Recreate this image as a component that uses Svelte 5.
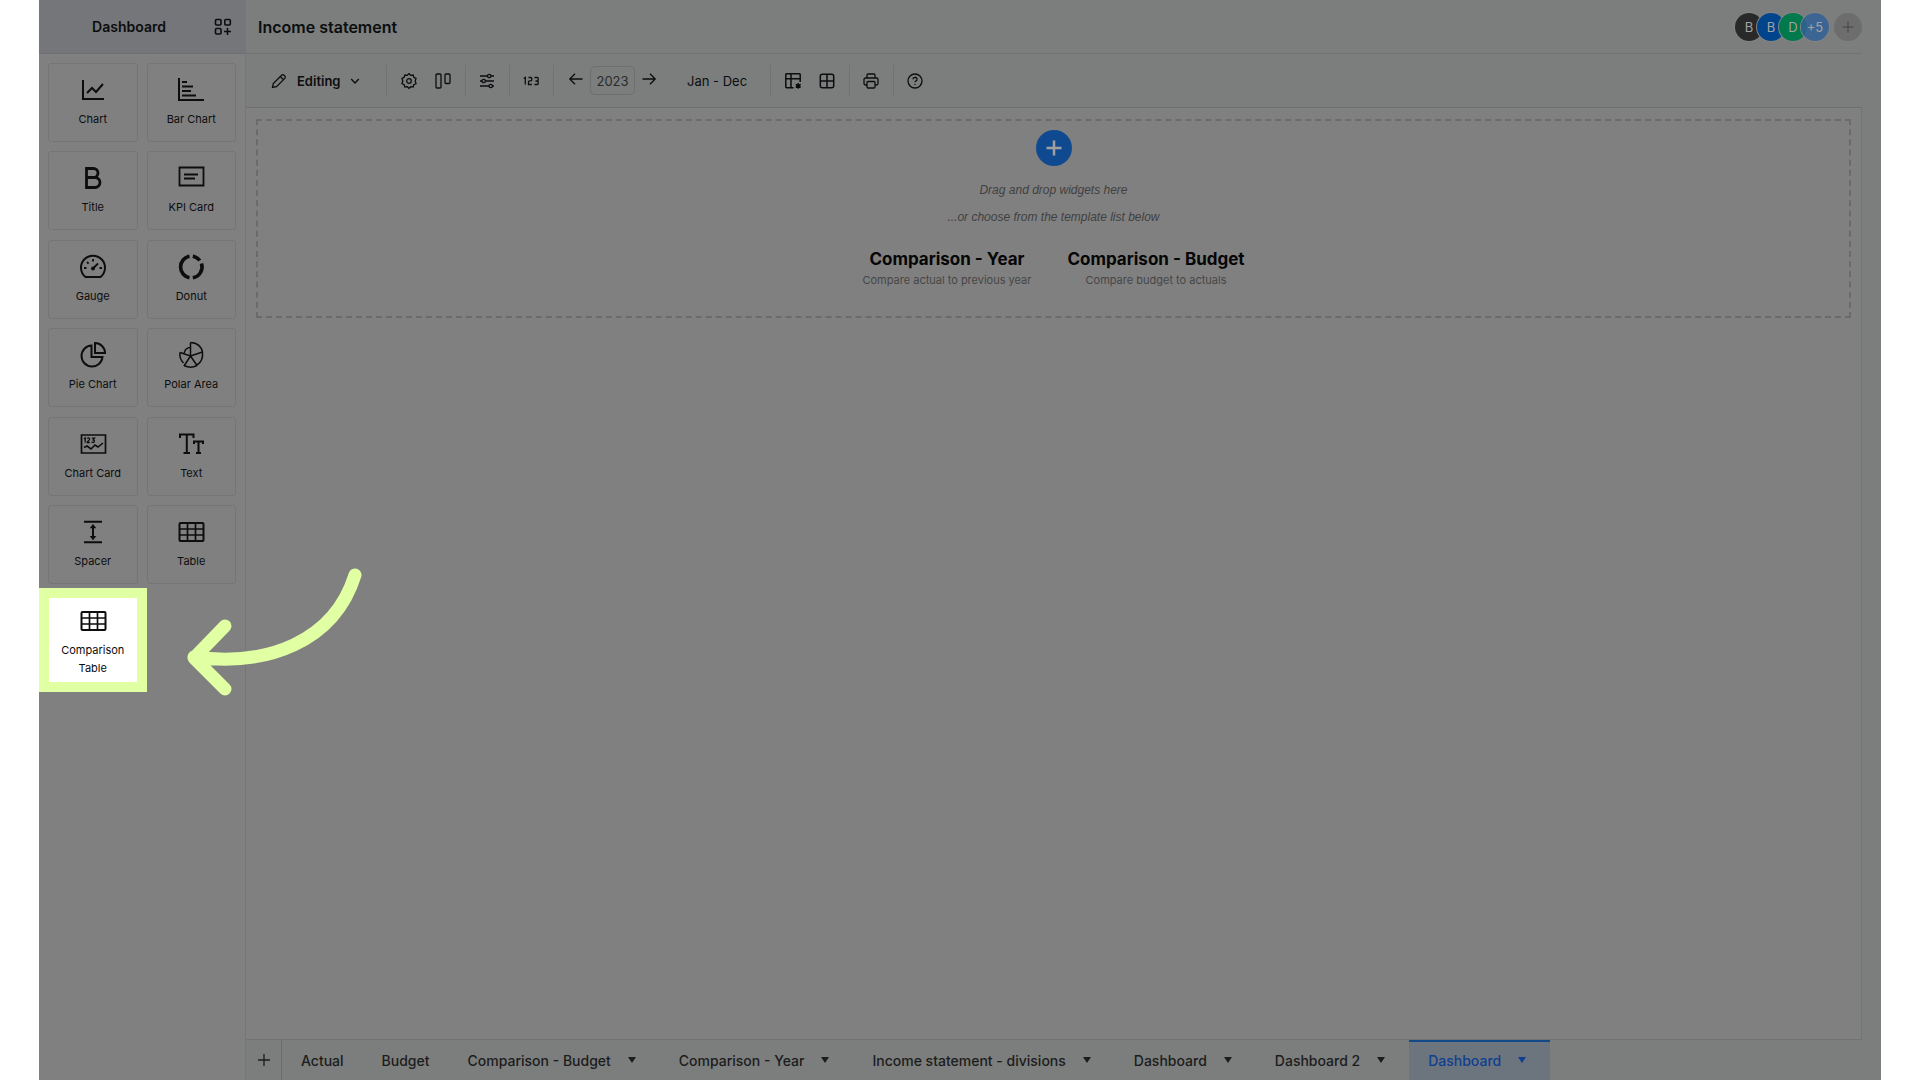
<script>
  const widgets = [
    { label: 'Chart', icon: 'chart' },
    { label: 'Bar Chart', icon: 'bar' },
    { label: 'Title', icon: 'title' },
    { label: 'KPI Card', icon: 'kpi' },
    { label: 'Gauge', icon: 'gauge' },
    { label: 'Donut', icon: 'donut' },
    { label: 'Pie Chart', icon: 'pie' },
    { label: 'Polar Area', icon: 'polar' },
    { label: 'Chart Card', icon: 'card' },
    { label: 'Text', icon: 'text' },
    { label: 'Spacer', icon: 'spacer' },
    { label: 'Table', icon: 'table' },
    { label: 'Comparison Table', icon: 'table', focus: true }
  ];

  const people = [
    { text: 'B', tone: 'dark' },
    { text: 'B', tone: 'blue' },
    { text: 'D', tone: 'green' },
    { text: '+5', tone: 'more' }
  ];

  const tabs = [
    { label: 'Actual' },
    { label: 'Budget' },
    { label: 'Comparison - Budget', menu: true },
    { label: 'Comparison - Year', menu: true },
    { label: 'Income statement - divisions', menu: true },
    { label: 'Dashboard', menu: true },
    { label: 'Dashboard 2', menu: true },
    { label: 'Dashboard', menu: true, active: true }
  ];

  const templates = [
    { title: 'Comparison - Year', note: 'Compare actual to previous year' },
    { title: 'Comparison - Budget', note: 'Compare budget to actuals' }
  ];
</script>

{#snippet widgetIcon(name)}
  <svg class="wicon" viewBox="0 0 28 28" aria-hidden="true">
    {#if name === 'chart'}
      <path d="M4 4v19h21" stroke-width="2" />
      <path d="M8 17l5-5 4 4 7-8" stroke-width="2" />
    {:else if name === 'bar'}
      <path d="M2 2v22h25" stroke-width="2" />
      <path d="M5 6h5M5 10.500h11M5 15h9M5 19.500h14" stroke-width="2" />
    {:else if name === 'title'}
      <path d="M7.500 4.500h7a4.500 4.500 0 0 1 0 9h-7zM7.500 13.500h8.500a5 5 0 0 1 0 10H7.500z" stroke-width="2.800" />
    {:else if name === 'kpi'}
      <path d="M2.500 3.500h24v18h-24z" stroke-width="1.800" />
      <path d="M7 10.500h14M7 14.500h11" stroke-width="2" />
    {:else if name === 'gauge'}
      <path d="M6.500 24A12 12 0 1 1 21.500 24z" stroke-width="2" />
      <path d="M14 15.500l5-5" stroke-width="1.800" />
      <circle cx="14" cy="15.500" r="2" class="fill" />
      <path d="M14 6v2.500M8 9l1.600 1.600M5 15h2.500M20.500 15H23" stroke-width="1.800" />
    {:else if name === 'donut'}
      <path d="M12.500 3.200A11 11 0 0 0 12.500 24.800" stroke-width="3.600" />
      <path d="M15.800 3.200a11 11 0 0 1 7 4.300M24.500 10.500a11 11 0 0 1-8.700 14.300" stroke-width="3.600" />
    {:else if name === 'pie'}
      <path d="M12.500 4.500a10.500 10.500 0 1 0 11 11.500h-11z" stroke-width="2" />
      <path d="M16 2v10h10a10 10 0 0 0-10-10z" stroke-width="2" />
    {:else if name === 'polar'}
      <path d="M13.500 1.500v13.500L3 11.500M13.500 15L7 25M13.500 15l6.500 9.500M13.500 15l12-4" stroke-width="1.500" />
      <path d="M13.500 1.500c6.500 0 11.500 4.500 12 10 .5 5.500-1.500 10-5.500 12.500M13.500 6.500c-3.500 0-5.700 2-6.500 6M3 11.500c-.8 4.500.5 7.500 3.500 10.500M7 24.500c4.500 2.200 9 2.200 13 0" stroke-width="1.500" />
    {:else if name === 'card'}
      <path d="M2.500 5h24v18h-24z" stroke-width="1.700" />
      <path d="M5 17.500l3-1.500 4 3 4-4 3 2 5-4" stroke-width="1.600" />
      <path d="M5 9l1.200-1v4.500M8.200 8.500c.6-.9 2.600-.7 2.400.7-.1 1-2.400 2.300-2.400 3.300h2.600M12.800 8.200h2.700l-1.400 1.700c2 .2 1.600 2.600 0 2.600-.8 0-1.300-.4-1.500-.8" stroke-width="1.300" />
    {:else if name === 'text'}
      <path d="M3 8V4.500h13.500V8M9.800 4.500v18.500M6.500 23h6.500M17 14v-2.500h9V14M21.500 11.500V23M19 23h5" stroke-width="2" />
    {:else if name === 'spacer'}
      <path d="M5 3.800h18M5 24.300h18" stroke-width="2" />
      <path d="M14 8v12" stroke-width="2" />
      <path d="M14 6l3.300 4.200h-6.600zM14 22.200l3.300-4.200h-6.600z" class="fill" />
    {:else}
      <rect x="2.500" y="5" width="24" height="18" rx="1" stroke-width="2" />
      <path d="M2.500 11h24M2.500 17h24M10.500 5v18M18.500 5v18" stroke-width="1.700" />
    {/if}
  </svg>
{/snippet}

<div class="app">
  <aside class="sidebar">
    <header class="side-head">
      <h2>Dashboard</h2>
      <button class="plain" aria-label="Add widget">
        <svg class="grid-plus" viewBox="0 0 18 18" aria-hidden="true">
          <rect x="1.500" y="1.500" width="5.500" height="5.500" rx="1" />
          <rect x="10.800" y="1.500" width="5.500" height="5.500" rx="1" />
          <rect x="1.500" y="10.500" width="5.500" height="5.500" rx="1" />
          <path d="M13.500 10v7M10 13.500h7" />
        </svg>
      </button>
    </header>
    <ul class="widgets">
      {#each widgets as w}
        <li class:focus={w.focus}>
          <button class="tile">
            {@render widgetIcon(w.icon)}
            <span>{w.label}</span>
          </button>
        </li>
      {/each}
    </ul>
  </aside>

  <main class="main">
    <header class="top">
      <h1>Income statement</h1>
      <div class="people">
        {#each people as p}
          <span class="avatar {p.tone}">{p.text}</span>
        {/each}
        <button class="avatar add" aria-label="Invite">
          <svg viewBox="0 0 12 12" aria-hidden="true"><path d="M6 .5v11M.5 6h11" /></svg>
        </button>
      </div>
    </header>

    <div class="toolbar" role="toolbar" aria-label="Document tools">
      <div class="group edit">
        <button class="mode">
          <svg class="i16" viewBox="0 0 16 16" aria-hidden="true"><path d="M1.500 14.500l.8-4 8.300-8.300a1.700 1.700 0 0 1 2.400 0l.8.800a1.700 1.700 0 0 1 0 2.400l-8.300 8.300zM9.300 3.500l3.200 3.200" /></svg>
          <span>Editing</span>
          <svg class="chev" viewBox="0 0 10 10" aria-hidden="true"><path d="M1.200 3l3.800 4 3.800-4" /></svg>
        </button>
      </div>
      <div class="group">
        <button class="plain" aria-label="Settings">
          <svg class="i16" viewBox="0 0 16 16" aria-hidden="true"><path d="M8 .7l1.800 1.600 2.400-.3.600 2.300 2.200 1-.800 2.700.800 2.700-2.200 1-.600 2.300-2.400-.3L8 15.300l-1.800-1.600-2.400.3-.600-2.300-2.200-1L1.800 8 1 5.300l2.200-1L3.800 2l2.400.3z" /><circle cx="8" cy="8" r="2.300" /></svg>
        </button>
        <button class="plain" aria-label="Columns">
          <svg class="i16" viewBox="0 0 16 16" aria-hidden="true"><rect x="1" y="1" width="5" height="14" rx="1" /><rect x="10" y="1" width="5" height="9.500" rx="1" /></svg>
        </button>
      </div>
      <div class="group single">
        <button class="plain" aria-label="Filters">
          <svg class="i16" viewBox="0 0 16 16" aria-hidden="true"><path d="M1 3h7.500M12 3h3M1 8h2M6.500 8H15M1 13h9M13.500 13H15" /><circle cx="10.200" cy="3" r="1.700" /><circle cx="4.700" cy="8" r="1.700" /><circle cx="11.700" cy="13" r="1.700" /></svg>
        </button>
      </div>
      <div class="group single">
        <button class="plain" aria-label="Number format">
          <svg class="i16" viewBox="0 0 16 16" aria-hidden="true"><path d="M.7 5.500L2.300 4.500V11.500M5.500 4.500h2.300a1 1 0 0 1 1 1v1.300a1 1 0 0 1-1 1H6.500a1 1 0 0 0-1 1v2.700h3.300M11.500 4.500h2.700a1 1 0 0 1 1 1v1.500a1 1 0 0 1-1 1h-1.700M14.200 8a1 1 0 0 1 1 1v1.500a1 1 0 0 1-1 1h-2.700" /></svg>
        </button>
      </div>
      <div class="group period">
        <button class="plain arrow" aria-label="Previous year">
          <svg class="i16" viewBox="0 0 16 16" aria-hidden="true"><path d="M14.500 8H2M7 2.800L1.800 8 7 13.200" /></svg>
        </button>
        <button class="year">2023</button>
        <button class="plain arrow" aria-label="Next year">
          <svg class="i16" viewBox="0 0 16 16" aria-hidden="true"><path d="M1.500 8H14M9 2.800L14.200 8 9 13.200" /></svg>
        </button>
        <button class="range">Jan - Dec</button>
      </div>
      <div class="group">
        <button class="plain" aria-label="Table settings">
          <svg class="i16" viewBox="0 0 16 16" aria-hidden="true"><path d="M15.200 9V1.500a.7.7 0 0 0-.7-.7H1.500a.7.7 0 0 0-.7.7v12.500a.7.7 0 0 0 .7.7h7M.8 5.800h14.400M6 .8v13.900" stroke-width="1.500" /><path d="M13.200 10v5.800M10.700 11.400l5 3M10.700 14.400l5-3" /><circle cx="13.200" cy="12.900" r="1.400" /></svg>
        </button>
        <button class="plain" aria-label="Grid">
          <svg class="i16" viewBox="0 0 16 16" aria-hidden="true"><rect x="1.300" y="1.300" width="13.400" height="13.400" rx="2" stroke-width="1.500" /><path d="M8 1.300v13.400M1.300 8h13.400" stroke-width="1.500" /></svg>
        </button>
      </div>
      <div class="group single">
        <button class="plain" aria-label="Print">
          <svg class="i16" viewBox="0 0 16 16" aria-hidden="true"><path d="M4 5V2a1 1 0 0 1 1-1h6a1 1 0 0 1 1 1v3M4 12H2.500A1.500 1.500 0 0 1 1 10.500v-4A1.500 1.500 0 0 1 2.500 5h11A1.500 1.500 0 0 1 15 6.500v4a1.500 1.500 0 0 1-1.500 1.500H12" /><rect x="4" y="8.500" width="8" height="6.500" rx="1" /></svg>
        </button>
      </div>
      <div class="group single">
        <button class="plain" aria-label="Help">
          <svg class="i16" viewBox="0 0 16 16" aria-hidden="true"><circle cx="8" cy="8" r="7" /><path d="M6 6.300a2 2 0 1 1 2.800 1.800c-.6.300-.8.600-.8 1.200M8 11v1" /></svg>
        </button>
      </div>
    </div>

    <section class="canvas">
      <div class="drop">
        <button class="add-widget" aria-label="Add widget here">
          <svg viewBox="0 0 16 16" aria-hidden="true"><path d="M8 .5v15M.5 8h15" /></svg>
        </button>
        <p class="hint">Drag and drop widgets here</p>
        <p class="hint">...or choose from the template list below</p>
        <div class="templates">
          {#each templates as t}
            <button class="template">
              <strong>{t.title}</strong>
              <small>{t.note}</small>
            </button>
          {/each}
        </div>
      </div>
    </section>

    <nav class="tabs" aria-label="Sheets">
      <button class="new" aria-label="New sheet">
        <svg viewBox="0 0 12 12" aria-hidden="true"><path d="M6 0v12M0 6h12" /></svg>
      </button>
      {#each tabs as t}
        <button class="tab" class:active={t.active} class:menu={t.menu}>
          {t.label}
          {#if t.menu}
            <svg viewBox="0 0 8 6" aria-hidden="true"><path d="M0 0h8L4 6z" /></svg>
          {/if}
        </button>
      {/each}
    </nav>
  </main>

  <svg class="pointer" viewBox="0 0 176 128" aria-hidden="true">
    <path d="M38 16L7 48l31 31M7 47C80 57 147 32 168-35" />
  </svg>
</div>

<style>
  :global(body) {
    margin: 0;
    background: #fff;
  }
  .app {
    position: relative;
    display: flex;
    min-height: 100vh;
    margin: 0 39px;
    background: #808080;
    color: #0c0d0e;
    font-family: Inter, 'Liberation Sans', sans-serif;
    font-size: 14px;
  }
  h1, h2, p, ul {
    margin: 0;
    padding: 0;
  }
  button {
    margin: 0;
    padding: 0;
    border: 0;
    background: none;
    color: inherit;
    font: inherit;
    cursor: pointer;
  }
  svg {
    display: block;
    flex: none;
    fill: none;
    stroke: currentColor;
    overflow: visible;
  }
  .plain {
    display: flex;
  }

  .sidebar {
    flex: none;
    box-sizing: border-box;
    width: 207px;
    border-right: 1px solid #747677;
  }
  .side-head {
    display: flex;
    align-items: center;
    box-sizing: border-box;
    height: 54px;
    padding: 0 13px 0 5px;
    border-bottom: 1px solid #6e7072;
    background: #757679;
  }
  h2 {
    flex: 1;
    font-size: 14px;
    font-weight: 600;
    text-align: center;
  }
  .grid-plus {
    width: 18px;
    height: 18px;
    stroke-width: 1.6;
  }
  .widgets {
    display: grid;
    grid-template-columns: 1fr 1fr;
    grid-auto-rows: 1fr;
    gap: 9px;
    box-sizing: border-box;
    min-height: 628px;
    padding: 9px;
    list-style: none;
  }
  .widgets li {
    position: relative;
    display: flex;
    min-height: 0;
  }
  .tile {
    display: flex;
    flex-direction: column;
    align-items: center;
    gap: 6px;
    flex: 1;
    box-sizing: border-box;
    height: 79px;
    padding: 12px 8px 0;
    border: 1px solid #757575;
    border-radius: 3px;
    font-size: 11px;
    line-height: 18px;
  }
  .wicon {
    width: 28px;
    height: 28px;
  }
  .fill {
    fill: currentColor;
    stroke: none;
  }
  .focus .tile {
    position: relative;
    border-color: transparent;
  }
  .focus::before {
    content: '';
    position: absolute;
    box-sizing: border-box;
    inset: -6px -9px -19px;
    border: 10px solid #e1ffa3;
    background: #fff;
  }

  .main {
    display: flex;
    flex: 1;
    flex-direction: column;
    min-width: 0;
    padding-right: 19px;
    background: #7b7e7d;
  }
  .top {
    display: flex;
    align-items: center;
    justify-content: space-between;
    box-sizing: border-box;
    height: 54px;
    padding-left: 12px;
    border-bottom: 1px solid #707372;
  }
  h1 {
    font-size: 16px;
    font-weight: 600;
  }
  .people {
    display: flex;
    align-items: center;
  }
  .avatar {
    display: flex;
    align-items: center;
    justify-content: center;
    box-sizing: border-box;
    width: 28px;
    height: 28px;
    border-radius: 50%;
    color: #a3a3a3;
    font-size: 13px;
    box-shadow: 0 0 0 1px #858585;
  }
  .avatar + .avatar {
    margin-left: -6px;
  }
  .dark { background: #292929; }
  .blue { background: #00458c; }
  .green { background: #00794c; }
  .more { background: rgba(50, 96, 150, 0.85); }
  .avatar + .add {
    margin-left: 5px;
    background: #6d6d6d;
    color: #454545;
    box-shadow: none;
  }
  .add svg {
    width: 12px;
    height: 12px;
  }

  .toolbar {
    display: flex;
    align-items: center;
    box-sizing: border-box;
    height: 54px;
    border-bottom: 1px solid #6c6f6e;
  }
  .group {
    display: flex;
    align-items: center;
    gap: 18px;
    box-sizing: border-box;
    height: 32px;
    padding: 0 14px;
    border-right: 1px solid #6f7271;
  }
  .group:last-child {
    border-right: 0;
  }
  .group.single {
    padding: 0 14px 0 13px;
  }
  .group.edit {
    width: 141px;
    padding: 0 0 0 25px;
  }
  .mode {
    display: flex;
    align-items: center;
    gap: 10px;
    font-size: 13px;
    font-weight: 600;
  }
  .i16 {
    width: 16px;
    height: 16px;
    stroke-width: 1.3;
  }
  .chev {
    width: 10px;
    height: 10px;
    stroke-width: 1.4;
  }
  .group.period {
    gap: 6px;
    padding: 0 23px 0 14px;
  }
  .arrow {
    padding-bottom: 3px;
  }
  .year {
    box-sizing: border-box;
    width: 45px;
    height: 29px;
    border: 1px solid #6c6f6e;
    border-radius: 5px;
    color: #2a2b2b;
    font-size: 13px;
  }
  .range {
    margin-left: 24px;
    font-size: 13px;
  }

  .canvas {
    flex: 1;
    padding: 11px 10px;
    border-right: 1px solid #747474;
    background: #808080;
  }
  .drop {
    display: flex;
    flex-direction: column;
    align-items: center;
    padding: 9px 0 27px;
    border: 2px dashed #6b6b6b;
  }
  .add-widget {
    display: flex;
    align-items: center;
    justify-content: center;
    width: 36px;
    height: 36px;
    margin-bottom: 11px;
    border-radius: 50%;
    background: #0f4a91;
    color: #a0a0a0;
  }
  .add-widget svg {
    width: 16px;
    height: 16px;
    stroke-width: 2.5;
  }
  .hint {
    color: #404040;
    font-family: 'Liberation Sans', Arial, sans-serif;
    font-size: 12px;
    font-style: italic;
    line-height: 27px;
  }
  .templates {
    display: flex;
    gap: 36px;
    margin-top: 16px;
  }
  .template {
    display: flex;
    flex-direction: column;
    align-items: center;
  }
  strong {
    color: #060606;
    font-size: 17px;
    font-weight: 700;
    line-height: 24px;
  }
  small {
    color: #464646;
    font-size: 11px;
    line-height: 18px;
  }

  .tabs {
    display: flex;
    height: 41px;
    box-sizing: border-box;
    border-top: 1px solid #727474;
    color: #1b1c1c;
    font-size: 14px;
    font-weight: 500;
  }
  .new {
    display: flex;
    align-items: center;
    justify-content: center;
    width: 36px;
    border-right: 1px solid #696c6b;
  }
  .new svg {
    width: 12px;
    height: 12px;
    stroke-width: 1.3;
  }
  .tab {
    display: flex;
    align-items: center;
    gap: 17px;
    padding: 0 19px 2px;
    border-top: 2px solid transparent;
    white-space: nowrap;
  }
  .tab.menu {
    padding-right: 24px;
  }
  .tab svg {
    width: 8px;
    height: 6px;
    fill: currentColor;
    stroke: none;
  }
  .tab.active {
    border-top-color: #104b88;
    background: #6c747e;
    color: #0f3f91;
  }

  /* Arrow that points at the highlighted widget */
  .pointer {
    position: absolute;
    top: 610px;
    left: 148px;
    width: 176px;
    height: 128px;
    stroke: #e1ffa3;
    stroke-width: 13;
    stroke-linecap: round;
    stroke-linejoin: round;
    pointer-events: none;
  }
</style>
